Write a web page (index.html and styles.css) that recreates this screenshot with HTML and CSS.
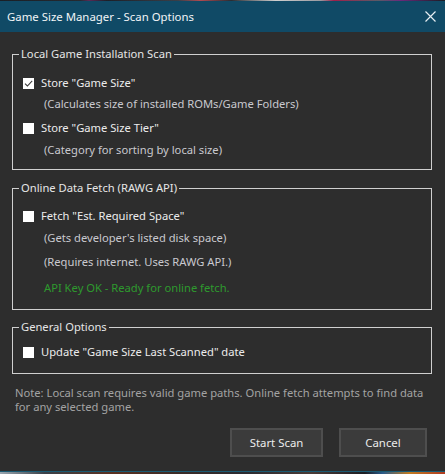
FILE: index.html
```html
<!DOCTYPE html>
<html>
<head>
<meta charset="utf-8">
<link rel="stylesheet" href="styles.css">
</head>
<body>
<div class="desk">
  <div class="strip strip-top"></div>
  <div class="window">
    <div class="titlebar">
      <span class="title">Game Size Manager - Scan Options</span>
      <svg class="close" width="11" height="11" viewBox="0 0 11 11"><path d="M0.5 0.5 L10.5 10.5 M10.5 0.5 L0.5 10.5" stroke="#e6eef2" stroke-width="1.2" fill="none"/></svg>
    </div>
    <div class="content">
      <fieldset class="group g1">
        <legend>Local Game Installation Scan</legend>
        <div class="check-row r1">
          <span class="box"><svg width="11" height="11" viewBox="0 0 11 11"><path d="M2 5.6 L4.4 8 L9.2 2.8" stroke="#3a3a3a" stroke-width="1.1" fill="none"/></svg></span>
          <span class="label">Store "Game Size"</span>
        </div>
        <div class="desc d1">(Calculates size of installed ROMs/Game Folders)</div>
        <div class="check-row r2">
          <span class="box"></span>
          <span class="label">Store "Game Size Tier"</span>
        </div>
        <div class="desc d2">(Category for sorting by local size)</div>
      </fieldset>

      <fieldset class="group g2">
        <legend>Online Data Fetch (RAWG API)</legend>
        <div class="check-row r3">
          <span class="box"></span>
          <span class="label">Fetch "Est. Required Space"</span>
        </div>
        <div class="desc d3">(Gets developer's listed disk space)</div>
        <div class="desc d4">(Requires internet. Uses RAWG API.)</div>
        <div class="desc ok">API Key OK - Ready for online fetch.</div>
      </fieldset>

      <fieldset class="group g3">
        <legend>General Options</legend>
        <div class="check-row r4">
          <span class="box"></span>
          <span class="label">Update "Game Size Last Scanned" date</span>
        </div>
      </fieldset>

      <p class="note">Note: Local scan requires valid game paths. Online fetch attempts to find data for any selected game.</p>

      <div class="buttons">
        <button class="btn start">Start Scan</button>
        <button class="btn cancel">Cancel</button>
      </div>
    </div>
  </div>
  <div class="teal-line"></div>
  <div class="strip strip-bottom"></div>
</div>
</body>
</html>
```

FILE: styles.css
```css
html, body {
  margin: 0;
  padding: 0;
  background: #2d2d2d;
}
body {
  width: 445px;
  height: 474px;
  overflow: hidden;
  font-family: "Noto Sans", "Open Sans", sans-serif;
  font-size: 11.2px;
}
.desk {
  width: 445px;
  height: 474px;
  display: flex;
  flex-direction: column;
}
.strip {
  flex: none;
}
.strip-top {
  height: 1px;
  background: linear-gradient(90deg, #1a1f26 0%, #262a30 18%, #5a2a55 20%, #1d2028 24%, #3a3f48 40%, #b04a50 45%, #2a2d33 52%, #cfcfcf 62%, #9a9aa0 72%, #a0204a 75%, #5a5a66 85%, #6a2a7a 90%, #1a1c22 100%);
}
.strip-bottom {
  height: 2px;
  background: linear-gradient(90deg, #9aa6b0 0%, #3a4048 10%, #5a3020 25%, #3a2a26 40%, #2a2a30 55%, #4a3a36 70%, #1c1c22 82%, #2a5a8a 86%, #c07a20 92%, #b03a20 100%);
}
.teal-line {
  height: 1px;
  flex: none;
  background: #1a5a72;
}
.window {
  flex: 1;
  display: flex;
  flex-direction: column;
  background: #2d2d2d;
}
.titlebar {
  height: 31px;
  flex: none;
  background: #104a66;
  display: flex;
  align-items: center;
  justify-content: space-between;
  padding: 0 9px 0 7px;
  color: #f2f5f7;
}
.title {
  font-size: 11.4px;
  line-height: 16px;
}
.close {
  display: block;
}
.content {
  flex: 1;
  padding: 14px 13px 0 12px;
  color: #e6e6e6;
}
.group {
  margin: 0;
  padding: 0;
  border: 1px solid #cfcfcf;
  min-width: 0;
}
.group legend {
  margin-left: 6px;
  padding: 0 2px;
  line-height: 16px;
  color: #e6e6e6;
}
.g2 {
  margin-top: 10px;
}
.g3 {
  margin-top: 9px;
}
.check-row {
  display: flex;
  align-items: center;
  gap: 7px;
  padding-left: 10px;
  line-height: 16px;
}
.box {
  width: 11px;
  height: 11px;
  background: #ffffff;
  flex: none;
  display: block;
}
.box svg {
  display: block;
}
.label {
  color: #ececec;
}
.desc {
  padding-left: 31px;
  line-height: 16px;
  color: #c9c9cf;
}
.ok {
  color: #2e9a2e;
}
.r1 { margin-top: 13px; }
.d1 { margin-top: 5px; }
.r2 { margin-top: 8px; }
.d2 { margin-top: 6px; margin-bottom: 11px; }
.r3 { margin-top: 12px; }
.d3 { margin-top: 6px; }
.d4 { margin-top: 8px; }
.ok { margin-top: 10px; margin-bottom: 13px; }
.r4 { margin-top: 9px; margin-bottom: 13px; }
.note {
  margin: 12px 0 0 3px;
  line-height: 14px;
  color: #a3a3a3;
}
.buttons {
  display: flex;
  justify-content: flex-end;
  gap: 16px;
  margin-top: 14px;
  padding-right: 5px;
}
.btn {
  height: 29px;
  margin: 0;
  background: #3b3b3b;
  border: 2px solid #4e4e4e;
  color: #ececec;
  font-family: "Noto Sans", "Open Sans", sans-serif;
  font-size: 11.4px;
  padding: 0;
}
.start { width: 93px; }
.cancel { width: 88px; }
```
